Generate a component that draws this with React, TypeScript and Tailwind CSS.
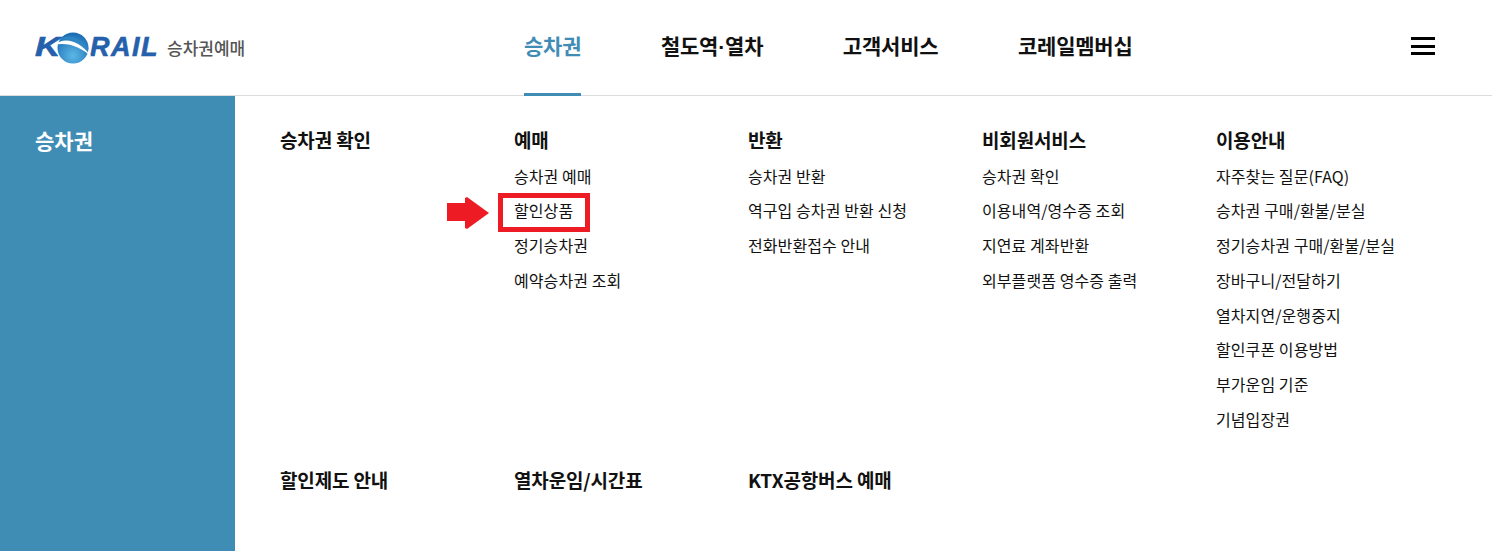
const font = { fontFamily: '"Noto Sans CJK KR", "Liberation Sans", sans-serif' }
const navFont = { fontFamily: '"Liberation Sans", "Noto Sans CJK KR", sans-serif' }

const navItems = ['승차권', '철도역·열차', '고객서비스', '코레일멤버십']

const columns = [
  { title: '승차권 확인', items: [] },
  { title: '예매', items: ['승차권 예매', '할인상품', '정기승차권', '예약승차권 조회'] },
  { title: '반환', items: ['승차권 반환', '역구입 승차권 반환 신청', '전화반환접수 안내'] },
  { title: '비회원서비스', items: ['승차권 확인', '이용내역/영수증 조회', '지연료 계좌반환', '외부플랫폼 영수증 출력'] },
  {
    title: '이용안내',
    items: [
      '자주찾는 질문(FAQ)',
      '승차권 구매/환불/분실',
      '정기승차권 구매/환불/분실',
      '장바구니/전달하기',
      '열차지연/운행중지',
      '할인쿠폰 이용방법',
      '부가운임 기준',
      '기념입장권',
    ],
  },
]

const bottomLinks = ['할인제도 안내', '열차운임/시간표', 'KTX공항버스 예매']

function Logo() {
  return (
    <div className="flex items-center">
      <div className="flex items-center h-[34px] w-[124px] font-['Liberation_Sans'] text-[27px] font-bold italic text-[#2460ac] leading-none [-webkit-text-stroke:0.6px_#2460ac]">
        <span className="inline-block w-[23px] scale-x-[1.3] origin-left">K</span>
        <svg viewBox="0 0 34 34" className="relative w-[34px] h-[34px] shrink-0 overflow-visible">
          <defs>
            <radialGradient id="globe" cx="0.5" cy="0.75" r="0.7">
              <stop offset="0" stopColor="#5cb8e6" />
              <stop offset="1" stopColor="#1d6fb5" />
            </radialGradient>
          </defs>
          <circle cx="17" cy="17" r="15.5" fill="url(#globe)" />
          <path d="M-2 14C8 6 22 8 37 27C24 15 11 11 -2 14Z" fill="#fff" />
          <path d="M3 9C11 3 22 4 34 19C24 9 13 7 3 9Z" fill="#2f86c5" />
        </svg>
        <span className="tracking-[1.5px]">RAIL</span>
      </div>
      <span className="ml-2 text-[17px] font-medium text-[#555]" style={font}>승차권예매</span>
    </div>
  )
}

export default function App() {
  return (
    <div className="w-[1492px] h-[551px] overflow-hidden bg-white" style={font}>
      <header className="h-[96px] flex items-center border-b border-[#dcdcdc] pl-[35px] pr-[57px]">
        <div className="w-[489px]">
          <Logo />
        </div>
        <nav className="flex h-full gap-[79.5px]" style={navFont}>
          {navItems.map((item, index) => (
            <a
              key={item}
              className={`h-[96px] pt-[31px] text-[21px] leading-[32px] font-bold tracking-[-0.2px] ${index === 0 ? 'text-[#3f8db5] border-b-[3px] border-[#3f8db5]' : 'text-[#111]'}`}
            >
              {item}
            </a>
          ))}
        </nav>
        <button className="ml-auto -mt-[3px] flex flex-col gap-[4.5px] w-[24px]">
          <span className="block h-[3px] bg-black" />
          <span className="block h-[3px] bg-black" />
          <span className="block h-[3px] bg-black" />
        </button>
      </header>

      <div className="flex h-[455px]">
        <aside className="w-[235px] bg-[#3f8db5] pl-[35px] pt-[27px]">
          <h2 className="text-[21px] leading-[34px] font-bold text-white">승차권</h2>
        </aside>

        <main className="flex-1 pl-[45px] pt-[27px]">
          <div className="grid grid-cols-[234px_234px_234px_234px_234px]">
            {columns.map(col => (
              <div key={col.title}>
                <h3 className="text-[19px] leading-[34.7px] font-bold text-[#111] tracking-[-0.15px]">{col.title}</h3>
                <ul className="mt-[1px]">
                  {col.items.map(item => (
                    <li key={item} className="relative text-[16px] leading-[34.7px] text-[#111] tracking-[0.08px]">
                      {item}
                      {item === '할인상품' && (
                        <>
                          <span className="absolute left-[-16px] top-0 w-[92px] h-[39px] border-[5px] border-[#ed1c24]" />
                          <svg viewBox="0 0 42 32" className="absolute left-[-67px] top-[4px] w-[42px] h-[32px]">
                            <path d="M0 6H18V1L20 0L42 16L20 32L18 31V24H0Z" fill="#ed1c24" />
                          </svg>
                        </>
                      )}
                    </li>
                  ))}
                </ul>
              </div>
            ))}
          </div>
          <div className="grid grid-cols-[234px_234px_234px] mt-[27px]">
            {bottomLinks.map(link => (
              <h3 key={link} className="text-[19px] leading-[34.7px] font-bold text-[#111] tracking-[-0.15px]">{link}</h3>
            ))}
          </div>
        </main>
      </div>
    </div>
  )
}
